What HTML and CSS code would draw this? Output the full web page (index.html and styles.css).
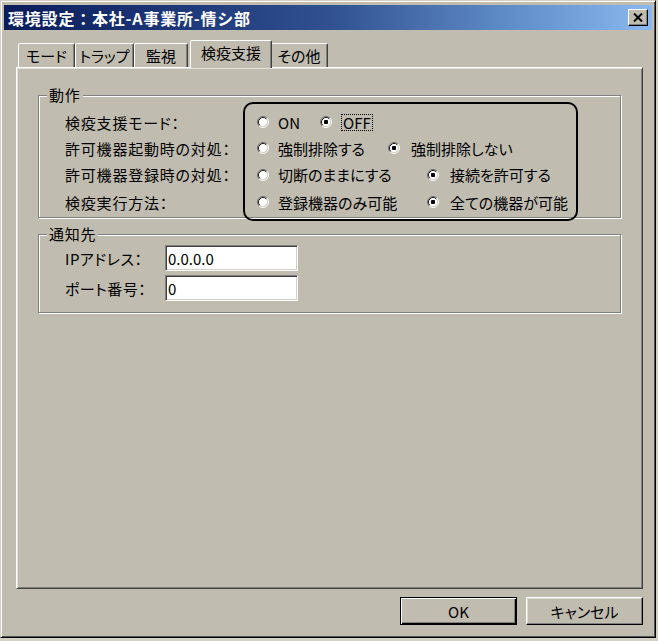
FILE: index.html
```html
<!DOCTYPE html>
<html lang="ja">
<head>
<meta charset="utf-8">
<title>環境設定</title>
<link rel="stylesheet" href="styles.css">
</head>
<body>
<svg class="defs" width="0" height="0" aria-hidden="true">
  <defs>
    <symbol id="r-off" viewBox="0 0 12 12">
      <circle cx="6" cy="6" r="4.5" fill="#fff"/>
      <path d="M2.11 9.89A5.5 5.5 0 0 1 9.89 2.11" stroke="#707070" fill="none"/>
      <path d="M9.89 2.11A5.5 5.5 0 0 1 2.11 9.89" stroke="#fff" fill="none"/>
      <path d="M2.82 9.18A4.5 4.5 0 0 1 9.18 2.82" stroke="#202020" fill="none"/>
      <path d="M9.18 2.82A4.5 4.5 0 0 1 2.82 9.18" stroke="#d4d0c8" fill="none"/>
    </symbol>
    <symbol id="r-on" viewBox="0 0 12 12">
      <circle cx="6" cy="6" r="4.5" fill="#fff"/>
      <path d="M2.11 9.89A5.5 5.5 0 0 1 9.89 2.11" stroke="#707070" fill="none"/>
      <path d="M9.89 2.11A5.5 5.5 0 0 1 2.11 9.89" stroke="#fff" fill="none"/>
      <path d="M2.82 9.18A4.5 4.5 0 0 1 9.18 2.82" stroke="#202020" fill="none"/>
      <path d="M9.18 2.82A4.5 4.5 0 0 1 2.82 9.18" stroke="#d4d0c8" fill="none"/>
      <rect x="4" y="4" width="4" height="4" rx="1" fill="#000"/>
    </symbol>
  </defs>
</svg>
<div class="window">
  <div class="titlebar">
    <span class="title">環境設定：本社-A事業所-情シ部</span>
    <span class="close"><svg width="10" height="9" viewBox="0 0 10 9"><path d="M1 0.5L9 8.5M9 0.5L1 8.5" stroke="#000" stroke-width="2"/></svg></span>
  </div>
  <div class="tabs">
    <div class="tab t1">モード</div>
    <div class="tab t2">トラップ</div>
    <div class="tab t3">監視</div>
    <div class="tab active">検疫支援</div>
    <div class="tab t5">その他</div>
  </div>
  <div class="panel">
    <div class="group g1">
      <span class="legend">動作</span>
      <div class="g1-body">
        <div class="labels">
          <div class="row r1">検疫支援モード：</div>
          <div class="row r2">許可機器起動時の対処：</div>
          <div class="row r3">許可機器登録時の対処：</div>
          <div class="row r4">検疫実行方法：</div>
        </div>
        <div class="choicebox">
          <div class="row r1">
            <span class="opt w1"><svg class="radio"><use href="#r-off"/></svg><span>ON</span></span>
            <span class="opt"><svg class="radio wide"><use href="#r-on"/></svg><span class="focus">OFF</span></span>
          </div>
          <div class="row r2">
            <span class="opt w2"><svg class="radio"><use href="#r-off"/></svg><span>強制排除する</span></span>
            <span class="opt"><svg class="radio wide"><use href="#r-on"/></svg><span>強制排除しない</span></span>
          </div>
          <div class="row r3">
            <span class="opt w3"><svg class="radio"><use href="#r-off"/></svg><span>切断のままにする</span></span>
            <span class="opt"><svg class="radio wide"><use href="#r-on"/></svg><span>接続を許可する</span></span>
          </div>
          <div class="row r4">
            <span class="opt w3"><svg class="radio"><use href="#r-off"/></svg><span>登録機器のみ可能</span></span>
            <span class="opt"><svg class="radio wide"><use href="#r-on"/></svg><span>全ての機器が可能</span></span>
          </div>
        </div>
      </div>
    </div>
    <div class="group g2">
      <span class="legend">通知先</span>
      <div class="field"><span class="flabel">IPアドレス：</span><input class="text" type="text" value="0.0.0.0"></div>
      <div class="field"><span class="flabel">ポート番号：</span><input class="text" type="text" value="0"></div>
    </div>
  </div>
  <div class="buttons">
    <button class="btn default">OK</button>
    <button class="btn">キャンセル</button>
  </div>
</div>
</body>
</html>
```
FILE: styles.css
```css
* { box-sizing: border-box; }
html, body { margin: 0; padding: 0; }
body {
  width: 658px;
  height: 641px;
  overflow: hidden;
  background: #d4d0c8;
  font-family: "Noto Sans CJK JP", "Noto Sans", sans-serif;
  font-size: 15px;
  line-height: 17px;
  color: #000;
  font-feature-settings: "palt";
}
.defs { position: absolute; width: 0; height: 0; }

.window {
  width: 656px;
  height: 638px;
  background: #c0bcb0;
  border: 1px solid;
  border-color: #d4d0c8 #000 #000 #d4d0c8;
  box-shadow: inset 1px 1px #fff, inset -1px -1px #555;
  padding: 4px 3px 0 3px;
  display: flex;
  flex-direction: column;
}

.titlebar {
  height: 25px;
  flex: none;
  display: flex;
  align-items: center;
  justify-content: space-between;
  padding: 0 4px 0 4px;
  background: linear-gradient(to right, #0a1c5a 0%, #1c3676 25%, #30508f 50%, #5a86c2 75%, #8ab8ee 100%);
  color: #fff;
}
.title {
  font-weight: 700;
  font-size: 16px;
  letter-spacing: 0.8px;
  line-height: 18px;
  font-feature-settings: normal;
}
.close {
  width: 20px;
  height: 17px;
  background: #c0bcb0;
  border: 1px solid;
  border-color: #fff #000 #000 #fff;
  box-shadow: inset -1px -1px #808080;
  display: flex;
  align-items: center;
  justify-content: center;
}

.tabs {
  display: flex;
  align-items: flex-end;
  height: 27px;
  margin: 10px 0 0 14px;
  position: relative;
  z-index: 1;
  flex: none;
}
.tab {
  height: 24px;
  border: 1px solid;
  border-bottom: none;
  border-color: #fff #404040 transparent #fff;
  box-shadow: inset -1px 0 #808080;
  border-radius: 2px 2px 0 0;
  display: flex;
  justify-content: center;
  align-items: center;
  padding-bottom: 1px;
  background: #c0bcb0;
  white-space: nowrap;
}
.t1 { width: 57px; }
.t2 { width: 59px; }
.t3 { width: 54px; }
.tab.active {
  width: 82px;
  height: 28px;
  margin: 0 -2px -1px 2px;
  position: relative;
  z-index: 2;
  padding-bottom: 5px;
}
.t5 { width: 58px; }

.panel {
  position: relative;
  z-index: 0;
  margin-left: 12px;
  width: 627px;
  height: 522px;
  flex: none;
  border: 1px solid;
  border-color: #fff #404040 #404040 #fff;
  box-shadow: inset 1px 1px #e4e1d9, inset -1px -1px #808080;
  padding: 27px 21px 0 21px;
}

.group {
  position: relative;
  border: 1px solid #808080;
  box-shadow: inset 1px 1px #fff, 1px 1px #fff;
}
.legend {
  position: absolute;
  top: -9px;
  left: 8px;
  padding: 0 2px;
  line-height: 16px;
  letter-spacing: 0.8px;
  background: #c0bcb0;
}

.g1 { padding: 6px 0 0 26px; }
.g1-body { display: flex; }
.labels {
  width: 178px;
  padding-top: 7px;
  letter-spacing: 0.8px;
}
.row {
  display: flex;
  align-items: center;
  white-space: nowrap;
}
.r1 { height: 26px; }
.r2 { height: 26px; }
.r3 { height: 27px; }
.r4 { height: 28px; }

.choicebox {
  width: 335px;
  height: 119px;
  border: 2px solid #000;
  border-radius: 10px;
  padding: 5px 0 0 12px;
  margin-bottom: -4px;
}
.opt {
  display: flex;
  align-items: center;
  white-space: nowrap;
}
.radio {
  width: 12px;
  height: 12px;
  flex: none;
  margin-right: 9px;
}
.radio.wide { margin-right: 11px; }
.w1 { width: 63px; }
.w2 { width: 131px; }
.w3 { width: 170px; }
.focus {
  border: 1px dotted #000;
  padding: 0 1px;
  margin-left: -2px;
  line-height: 15px;
}

.g2 {
  margin-top: 16px;
  padding: 10px 0 11px 26px;
}
.field {
  display: flex;
  align-items: center;
}
.field + .field { margin-top: 4px; }
.flabel { width: 100px; letter-spacing: 0.5px; }
.text {
  width: 133px;
  height: 26px;
  margin: 0;
  padding: 0 2px;
  border: 1px solid;
  border-color: #808080 #fff #fff #808080;
  box-shadow: inset 1px 1px #404040, inset -1px -1px #d4d0c8;
  background: #fff;
  font: inherit;
  color: #000;
  outline: none;
}

.buttons {
  display: flex;
  justify-content: flex-end;
  gap: 9px;
  margin-top: 8px;
  padding-right: 9px;
  flex: none;
}
.btn {
  width: 117px;
  height: 28px;
  margin: 0;
  padding: 0;
  font: inherit;
  color: #000;
  background: #c0bcb0;
  border: 1px solid;
  border-color: #fff #000 #000 #fff;
  box-shadow: inset -1px -1px #808080, inset 1px 1px #dcd9d0;
}
.btn.default {
  border-color: #000;
  box-shadow: inset 1px 1px #fff, inset -1px -1px #000, inset -2px -2px #808080;
}
```
